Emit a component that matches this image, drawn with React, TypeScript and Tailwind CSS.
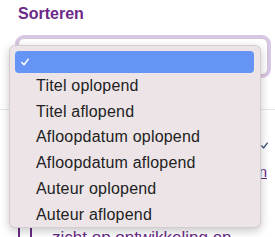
const OPTIONS = [
  "Titel oplopend",
  "Titel aflopend",
  "Afloopdatum oplopend",
  "Afloopdatum aflopend",
  "Auteur oplopend",
  "Auteur aflopend",
];

function Check({ className }: { className?: string }) {
  return (
    <svg viewBox="0 0 10 10" fill="none" stroke="currentColor" strokeWidth="1.8" strokeLinecap="round" strokeLinejoin="round" className={className}>
      <polyline points="1,5.5 3.8,8.5 9,1.5" />
    </svg>
  );
}

export default function App() {
  return (
    <div className="relative w-[275px] h-[237px] overflow-hidden bg-white font-['Liberation_Sans',Arial,sans-serif]">
      {/* Label */}
      <div className="pl-[18px] pt-[4px] text-[16px] leading-[20px] font-bold text-[#6b2a87]">Sorteren</div>

      {/* Select met focus-ring */}
      <div className="ml-[15px] mt-[11px] w-[256px] h-[43px] rounded-[9px] bg-[#dac7e6] p-[3px]">
        <div className="h-full rounded-[6px] bg-white border border-[#cfc6d3]" />
      </div>

      {/* Pagina-inhoud achter het menu */}
      <div className="mt-[31px] border-t border-[#dfe8ec]" />
      <div className="flex justify-end pr-[7px] mt-[32px]">
        <Check className="w-[7px] h-[7px] text-[#2c4470]" />
      </div>
      <div className="flex justify-end pr-[8px] mt-[14px]">
        <span className="text-[15px] leading-[18px] text-[#6b2a87] underline">Filters wissen</span>
      </div>
      <div className="flex items-start gap-[20px] pl-[18px] mt-[47px]">
        <div className="w-[14px] h-[14px] border-2 border-[#6b2a87] rounded-[2px] shrink-0 -mt-[3px]" />
        <span className="text-[17px] leading-[20px] text-[#6b2a87] whitespace-nowrap">zicht op ontwikkeling en</span>
      </div>

      {/* Open keuzemenu */}
      <div className="absolute left-[9px] top-[45px] w-[252px] h-[183px] rounded-[6px] bg-[#ece4e7] border border-black/10 shadow-[0_3px_10px_rgba(0,0,0,0.22)] pt-[5px] pl-[5px] pr-[6px]">
        <div className="h-[22px] rounded-[4px] bg-[#6594f6] flex items-center pl-[6px]">
          <Check className="w-[8px] h-[8px] text-white" />
        </div>
        {OPTIONS.map((o) => (
          <div key={o} className="h-[25.75px] flex items-center pl-[21px] text-[16px] tracking-[0.2px] text-[#222]">
            {o}
          </div>
        ))}
      </div>
    </div>
  );
}
